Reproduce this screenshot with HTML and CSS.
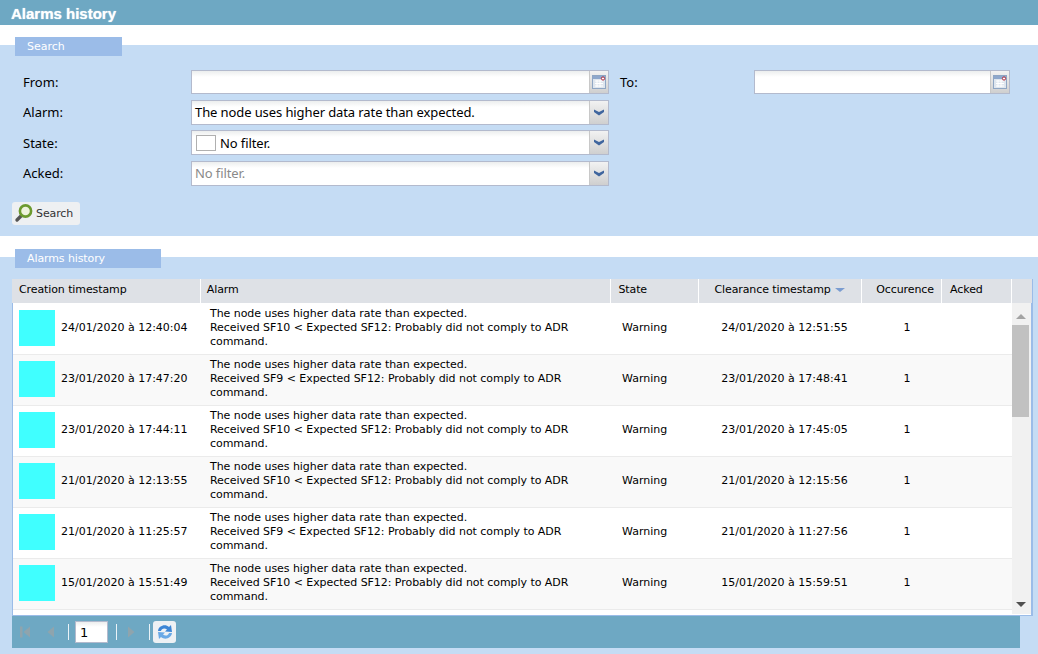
FILE: index.html
```html
<!DOCTYPE html>
<html lang="en">

<head>
    <meta charset="UTF-8">
    <meta name="viewport" content="width=device-width, initial-scale=1.0">
    <title>Alarms history</title>
    <link rel="stylesheet" href="styles.css">
</head>

<body>
    <svg class="defs" width="0" height="0">
        <defs>
            <symbol id="cal" viewBox="0 0 14 16">
                <rect x="0.5" y="1.5" width="13" height="13" fill="#dfe6ee" stroke="#8fa6c4"/>
                <rect x="1" y="2" width="12" height="3" fill="#8fa8cc"/>
                <path d="M3 7h8M3 9.5h8M3 12h8M5 6v7M8 6v7" stroke="#fff" fill="none"/>
                <circle cx="11" cy="4.500" r="1.600" fill="#fff" stroke="#b0283a"/>
            </symbol>
            <symbol id="chev" viewBox="0 0 10 7">
                <path d="M0 0.500 L5 3 L10 0.500 L10 3 L5 6.500 L0 3 Z" fill="#3f659e"/>
            </symbol>
        </defs>
    </svg>

    <h1 class="page-title">Alarms history</h1>

    <section class="panel search-panel">
        <div class="tab tab-search">Search</div>
        <form class="filter">
            <label class="lbl">From:</label>
            <div class="field"><span class="val"></span><span class="btn"><svg class="ico-cal"><use href="#cal"/></svg></span></div>
            <label class="lbl lbl-to">To:</label>
            <div class="field"><span class="val"></span><span class="btn"><svg class="ico-cal"><use href="#cal"/></svg></span></div>

            <label class="lbl">Alarm:</label>
            <div class="field tall"><span class="val">The node uses higher data rate than expected.</span><span class="btn"><svg class="ico-chev"><use href="#chev"/></svg></span></div>
            <span></span><span></span>

            <label class="lbl">State:</label>
            <div class="field tall"><span class="val"><i class="swatch"></i>No filter.</span><span class="btn"><svg class="ico-chev"><use href="#chev"/></svg></span></div>
            <span></span><span></span>

            <label class="lbl">Acked:</label>
            <div class="field tall"><span class="val muted">No filter.</span><span class="btn"><svg class="ico-chev"><use href="#chev"/></svg></span></div>
        </form>
        <button class="search-btn" type="button">
            <svg width="20" height="20" viewBox="0 0 20 20">
                <path d="M7.500 12.500 L3 17" stroke="#555" stroke-width="3.400" stroke-linecap="round"/>
                <circle cx="11.500" cy="8" r="5.600" fill="#eef3dc" stroke="#6c9a2e" stroke-width="2.600"/>
            </svg>
            Search
        </button>
    </section>

    <section class="panel grid-panel">
        <div class="tab tab-grid">Alarms history</div>
        <div class="grid">
            <div class="grid-head">
                <div class="th c1">Creation timestamp</div>
                <div class="th c2">Alarm</div>
                <div class="th c3">State</div>
                <div class="th c4 center">Clearance timestamp <i class="sort"></i></div>
                <div class="th c5 center">Occurence</div>
                <div class="th c6">Acked</div>
                <div class="th c7"></div>
            </div>
            <div class="grid-body">
                <div class="rows" id="rows">
                    <div class="row">
                        <div class="td c1"><i class="color"></i>24/01/2020 à 12:40:04</div>
                        <div class="td c2">The node uses higher data rate than expected.<br>Received SF10 &lt; Expected SF12: Probably did not comply to ADR command.</div>
                        <div class="td c3">Warning</div>
                        <div class="td c4 center">24/01/2020 à 12:51:55</div>
                        <div class="td c5 center">1</div>
                        <div class="td c6"></div>
                    </div>
                    <div class="row">
                        <div class="td c1"><i class="color"></i>23/01/2020 à 17:47:20</div>
                        <div class="td c2">The node uses higher data rate than expected.<br>Received SF9 &lt; Expected SF12: Probably did not comply to ADR command.</div>
                        <div class="td c3">Warning</div>
                        <div class="td c4 center">23/01/2020 à 17:48:41</div>
                        <div class="td c5 center">1</div>
                        <div class="td c6"></div>
                    </div>
                    <div class="row">
                        <div class="td c1"><i class="color"></i>23/01/2020 à 17:44:11</div>
                        <div class="td c2">The node uses higher data rate than expected.<br>Received SF10 &lt; Expected SF12: Probably did not comply to ADR command.</div>
                        <div class="td c3">Warning</div>
                        <div class="td c4 center">23/01/2020 à 17:45:05</div>
                        <div class="td c5 center">1</div>
                        <div class="td c6"></div>
                    </div>
                    <div class="row">
                        <div class="td c1"><i class="color"></i>21/01/2020 à 12:13:55</div>
                        <div class="td c2">The node uses higher data rate than expected.<br>Received SF10 &lt; Expected SF12: Probably did not comply to ADR command.</div>
                        <div class="td c3">Warning</div>
                        <div class="td c4 center">21/01/2020 à 12:15:56</div>
                        <div class="td c5 center">1</div>
                        <div class="td c6"></div>
                    </div>
                    <div class="row">
                        <div class="td c1"><i class="color"></i>21/01/2020 à 11:25:57</div>
                        <div class="td c2">The node uses higher data rate than expected.<br>Received SF9 &lt; Expected SF12: Probably did not comply to ADR command.</div>
                        <div class="td c3">Warning</div>
                        <div class="td c4 center">21/01/2020 à 11:27:56</div>
                        <div class="td c5 center">1</div>
                        <div class="td c6"></div>
                    </div>
                    <div class="row">
                        <div class="td c1"><i class="color"></i>15/01/2020 à 15:51:49</div>
                        <div class="td c2">The node uses higher data rate than expected.<br>Received SF10 &lt; Expected SF12: Probably did not comply to ADR command.</div>
                        <div class="td c3">Warning</div>
                        <div class="td c4 center">15/01/2020 à 15:59:51</div>
                        <div class="td c5 center">1</div>
                        <div class="td c6"></div>
                    </div>
                    <div class="row">
                        <div class="td c1"><i class="color"></i>15/01/2020 à 12:02:11</div>
                        <div class="td c2">The node uses higher data rate than expected.<br>Received SF10 &lt; Expected SF12: Probably did not comply to ADR command.</div>
                        <div class="td c3">Warning</div>
                        <div class="td c4 center">15/01/2020 à 12:05:20</div>
                        <div class="td c5 center">1</div>
                        <div class="td c6"></div>
                    </div>
                </div>
                <div class="scroll">
                    <i class="arrow up"></i>
                    <div class="thumb"></div>
                    <i class="arrow down"></i>
                </div>
            </div>
        </div>
        <div class="pager">
            <svg class="pg-first" width="14" height="14" viewBox="0 0 14 14"><path d="M2 1.500h2.500v11H2z M12 1.500v11L5.500 7z" fill="#8fa4ad"/></svg>
            <svg class="pg-prev" width="14" height="14" viewBox="0 0 14 14"><path d="M10 1.500v11L3.500 7z" fill="#8fa4ad"/></svg>
            <span class="sep sep-a"></span>
            <span class="page-input">1</span>
            <span class="sep sep-b"></span>
            <svg width="14" height="14" viewBox="0 0 14 14"><path d="M4 1.500v11L10.500 7z" fill="#8fa4ad"/></svg>
            <span class="sep sep-c"></span>
            <span class="refresh">
                <svg width="20" height="20" viewBox="0 0 20 20">
                    <path d="M3 9 C3.500 4 10 1.500 14 5 L16 3 L17 10 L10 9.500 L12 7.500 C9.500 5.500 6.500 6.500 6 9 Z" fill="#3d86d6"/>
                    <path d="M17 11 C16.500 16 10 18.500 6 15 L4 17 L3 10 L10 10.500 L8 12.500 C10.500 14.500 13.500 13.500 14 11 Z" fill="#6aa9e6"/>
                </svg>
            </span>
        </div>
    </section>
</body>

</html>
```

FILE: styles.css
```css
* {
    box-sizing: border-box;
}

html,
body {
    height: 100%;
}

body {
    margin: 0;
    background: #fff;
    font-family: "DejaVu Sans", sans-serif;
    font-size: 11px;
    color: #000;
    overflow: hidden;
}

.defs {
    position: absolute;
}

.page-title {
    margin: 0 0 20px;
    height: 25px;
    padding-left: 11px;
    background: #6ea8c3;
    color: #fff;
    font-family: "Liberation Sans", sans-serif;
    font-size: 15px;
    font-weight: bold;
    line-height: 27px;
    text-shadow: 0 0 1px #dfeef5;
}

.panel {
    background: #c5dcf4;
}

.search-panel {
    height: 191px;
    margin-bottom: 21px;
}

.grid-panel {
    height: 397px;
}

.tab {
    position: relative;
    top: -8px;
    height: 19px;
    margin-left: 15px;
    padding-left: 12px;
    background: #9bbce8;
    color: #fff;
    font-size: 11px;
    line-height: 19px;
}

.tab-search {
    width: 107px;
}

.tab-grid {
    width: 146px;
    letter-spacing: -0.1px;
}

.filter {
    display: grid;
    grid-template-columns: 168px 418px 145px 256px;
    grid-template-rows: 25px 25px 25px 25px;
    row-gap: 5.500px;
    margin: 5px 0 0 23px;
    align-items: center;
}

.lbl {
    font-family: "Noto Sans", sans-serif;
    font-size: 13px;
}

.lbl-to {
    padding-left: 11px;
}

.field {
    display: flex;
    height: 24px;
    border: 1px solid #b3bacd;
    background: linear-gradient(#eceeee, #fff 6px);
    font-family: "Noto Sans", sans-serif;
    font-size: 13px;
    letter-spacing: -0.1px;
}

.field.tall {
    height: 25px;
}

.val {
    display: flex;
    flex: 1;
    align-items: center;
    padding-left: 3px;
    white-space: nowrap;
}

.muted {
    color: #8a8a8a;
}

.swatch {
    width: 20px;
    height: 16px;
    margin-right: 4px;
    margin-left: 1px;
    border: 1px solid #b0b0b0;
    background: #fff;
}

.btn {
    display: flex;
    align-items: center;
    justify-content: center;
    width: 19px;
    background: linear-gradient(#f2f2f2, #cfcfcf);
    border-left: 1px solid #c8c8c8;
}

.ico-cal {
    width: 14px;
    height: 16px;
}

.ico-chev {
    width: 10px;
    height: 7px;
}

.search-btn {
    display: flex;
    align-items: center;
    gap: 2px;
    width: 68px;
    height: 23px;
    margin: 16px 0 0 12px;
    padding: 0 0 0 2px;
    border: 0;
    border-radius: 3px;
    background: #eef0f2;
    color: #333;
    font-family: "DejaVu Sans", sans-serif;
    font-size: 11px;
    letter-spacing: -0.1px;
}

.grid {
    width: 1021px;
    margin: 3px 0 0 12px;
    border-left: 1px solid #9bbce8;
    border-right: 2px solid #9bbce8;
    border-bottom: 1px solid #9bbce8;
    background: #fff;
}

.grid-head {
    display: flex;
    height: 24px;
    margin: 0 -1px;
    background: #dee1e6;
}

.th {
    border-right: 1px solid #fff;
    line-height: 22px;
    letter-spacing: -0.1px;
    white-space: nowrap;
}

.grid-head .c1 {
    width: 189px;
    padding-left: 7px;
}

.grid-head .c2 {
    width: 411px;
    padding-left: 6px;
}

.grid-head .c3 {
    width: 88px;
    padding-left: 7px;
}

.grid-head .c4 {
    width: 163px;
    padding-right: 1px;
}

.grid-head .c5 {
    width: 80px;
    padding-left: 7px;
}

.grid-head .c6 {
    width: 70px;
    padding-left: 8px;
}

.grid-head .c7 {
    width: 20px;
    border-right: 0;
}

.center {
    text-align: center;
}

.sort {
    display: inline-block;
    margin-left: 1px;
    border-style: solid;
    border-width: 4px 5px 0;
    border-color: #7a9cd0 transparent transparent;
    vertical-align: 1px;
}

.grid-body {
    display: flex;
    height: 312px;
    padding-top: 1px;
    overflow: hidden;
}

.rows {
    width: 999px;
    flex: none;
}

.row {
    display: flex;
    align-items: center;
    height: 51px;
    padding-bottom: 3px;
    border-bottom: 1px solid #ebebeb;
}

.row:nth-child(even) {
    background: #f9f9f9;
}

.row .c1 {
    display: flex;
    align-items: center;
    gap: 6px;
    width: 187px;
    padding-left: 6px;
}

.color {
    width: 36px;
    height: 36px;
    background: #40ffff;
}

.row .c2 {
    width: 412px;
    padding: 0 30px 0 10px;
    line-height: 14px;
    letter-spacing: -0.05px;
}

.row .c3 {
    width: 88px;
    padding-left: 10px;
}

.row .c4 {
    width: 163px;
    padding-left: 6px;
}

.row .c5 {
    width: 80px;
    padding-left: 8px;
}

.row .c6 {
    width: 69px;
}

.scroll {
    display: flex;
    flex-direction: column;
    align-items: center;
    width: 20px;
    height: 311px;
    margin-top: -1px;
    padding-right: 2px;
    background: #f1f1f1;
}

.arrow {
    width: 0;
    height: 0;
    border-style: solid;
    border-color: transparent;
}

.arrow.up {
    margin: 11px 0 6px;
    border-width: 0 5px 5px;
    border-bottom-color: #a3a3a3;
}

.arrow.down {
    margin-top: 185px;
    border-width: 5px 5px 0;
    border-top-color: #505050;
}

.thumb {
    width: 17px;
    height: 92px;
    background: #c1c1c1;
}

.pager {
    display: flex;
    align-items: center;
    width: 1008px;
    height: 32px;
    margin-left: 12px;
    padding-left: 6px;
    background: #6ea8c3;
}

.pg-prev {
    margin-left: 12px;
}

.sep {
    width: 1px;
    height: 16px;
    background: #eaf3f8;
}

.sep-a {
    margin: 0 6px 0 10px;
}

.sep-b {
    margin: 0 7px 0 8px;
}

.sep-c {
    margin: 0 3px 0 11px;
}

.page-input {
    width: 33px;
    height: 22px;
    padding-left: 4px;
    border: 1px solid #b3bacd;
    background: linear-gradient(#eceeee, #fff 5px);
    font-size: 13px;
    line-height: 21px;
}

.refresh {
    display: flex;
    align-items: center;
    justify-content: center;
    width: 23px;
    height: 22px;
    border-radius: 3px;
    background: #eef1f4;
}
```
